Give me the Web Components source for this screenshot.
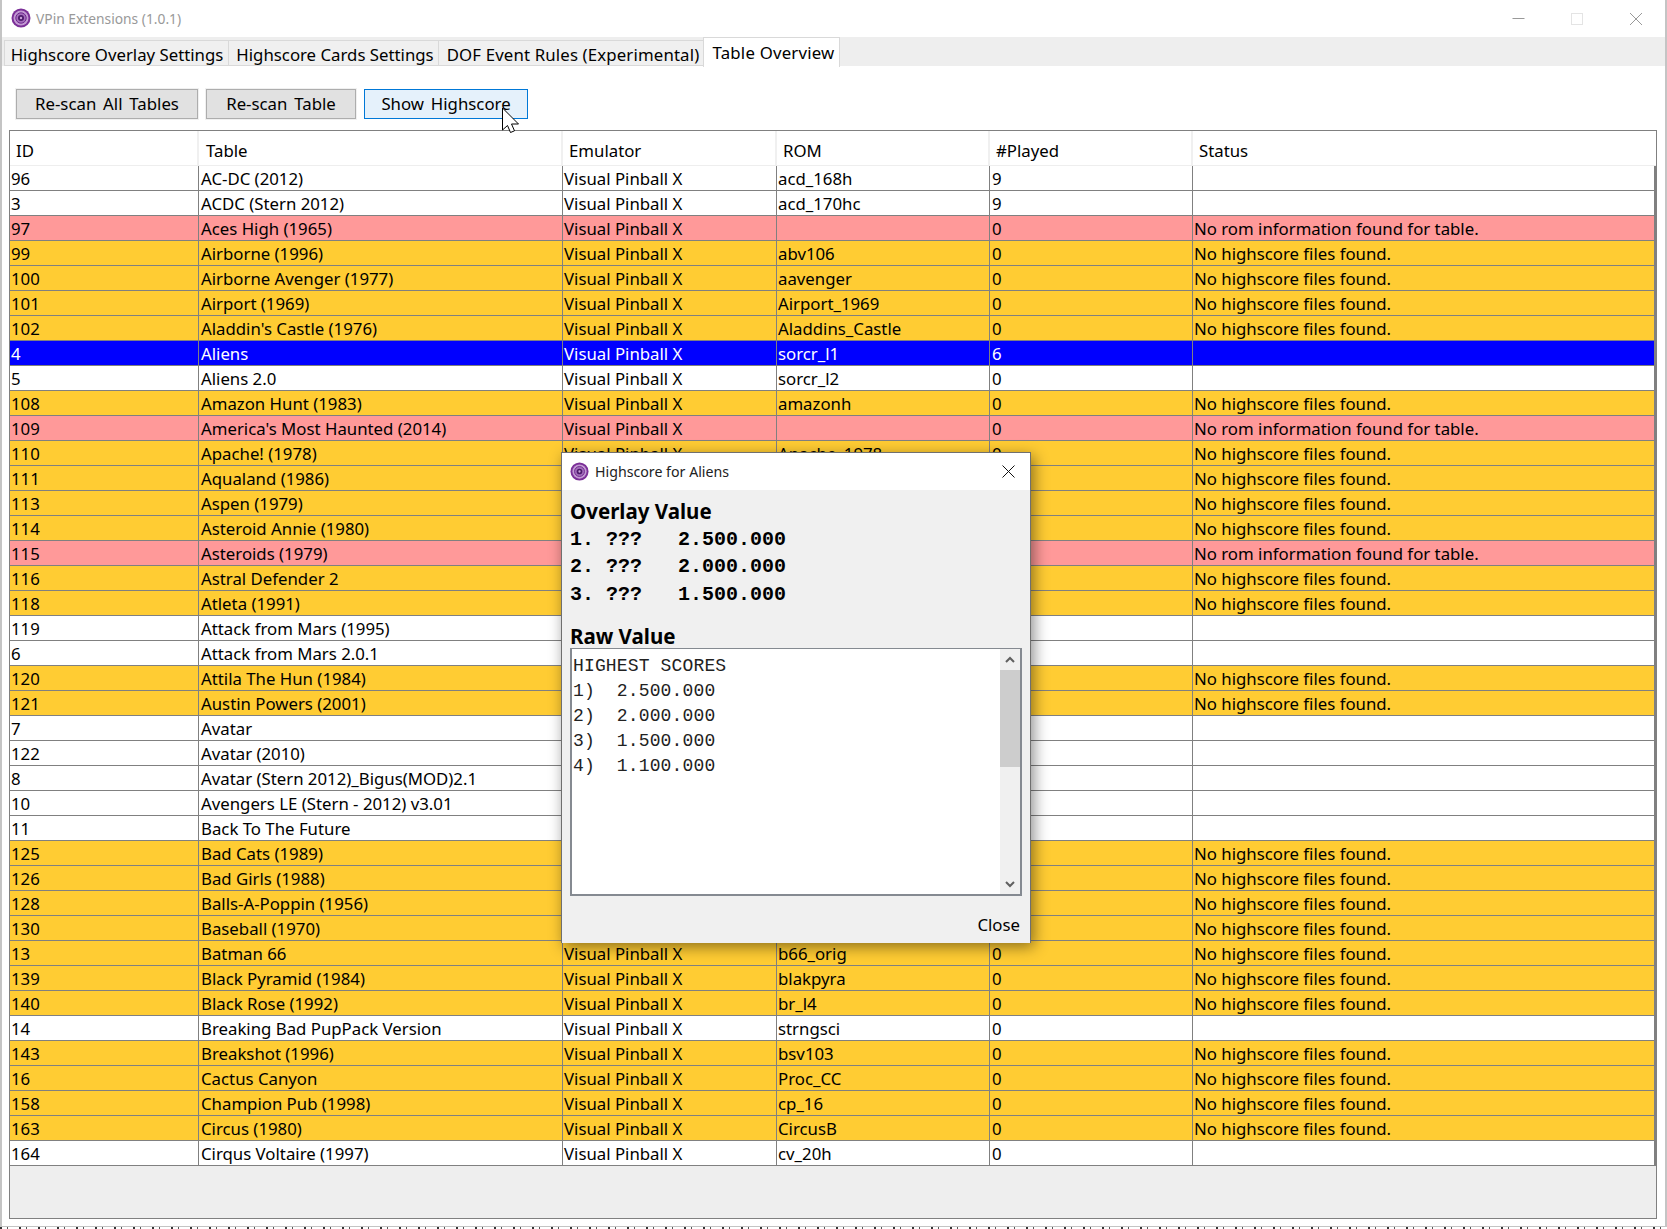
<!DOCTYPE html>
<html>
<head>
<meta charset="utf-8">
<title>VPin Extensions</title>
<style>
  html, body { margin: 0; padding: 0; background: #fff; }
  body { font-family: "Noto Sans", sans-serif; overflow: hidden; }
</style>
</head>
<body>
<vp-window>
  <vp-titlebar slot="title">VPin Extensions (1.0.1)</vp-titlebar>
  <vp-tabs slot="tabs"></vp-tabs>
  <vp-button slot="toolbar" style="width:182px">Re-scan All Tables</vp-button>
  <vp-button slot="toolbar" style="width:150px">Re-scan Table</vp-button>
  <vp-button slot="toolbar" style="width:164px" hover>Show Highscore</vp-button>
  <vp-table slot="content"></vp-table>
  <vp-dialog slot="overlay">Highscore for Aliens</vp-dialog>
  <vp-cursor slot="overlay"></vp-cursor>
</vp-window>
<vp-desktop></vp-desktop>

<script>
(function() {

  const UI_FONT = '"Noto Sans", "Open Sans", sans-serif';

  // Small helper: every element below fills its shadow root from a string
  class Base extends HTMLElement {
    constructor(html) {
      super();
      this.attachShadow({mode: 'open'});
      this.shadowRoot.innerHTML = html;
    }
  }

  const APP_ICON = `
    <circle cx="10" cy="10" r="9.5" fill="#7b2f98"/>
    <circle cx="10" cy="10" r="7.5" fill="#c39ad3"/>
    <circle cx="10" cy="10" r="5.2" fill="#a56dbd" stroke="#6d2a8c" stroke-width="1"/>
    <circle cx="10" cy="10" r="3" fill="#4d1a6b"/>
    <circle cx="10" cy="10" r="1.2" fill="#c9a3d8"/>`;

  // Main window, holds the named regions
  class VpWindow extends Base {
    constructor() {
      super(`
        <style>
          :host { display: block; position: relative; height: 1227px; box-sizing: border-box;
                  border-left: 2px solid #c4c4c4; border-right: 2px solid #c4c4c4;
                  border-bottom: 1px solid #c4c4c4; background: #fff; font-family: ${UI_FONT}; }
          .frame { display: flex; flex-direction: column; height: 100%; }
          .page { flex: 1; display: flex; flex-direction: column; min-height: 0;
                  padding: 23px 8px 7px 7px; margin-top: -1px;
                  border-top: 1px solid #d9d9d9; }
          .toolbar { display: flex; gap: 8px; padding-left: 7px; margin-bottom: 11px; }
        </style>
        <div class="frame">
          <slot name="title"></slot>
          <slot name="tabs"></slot>
          <div class="page">
            <div class="toolbar"><slot name="toolbar"></slot></div>
            <slot name="content"></slot>
          </div>
        </div>
        <slot name="overlay"></slot>`);
    }
  }
  customElements.define('vp-window', VpWindow);

  class VpTitlebar extends Base {
    constructor() {
      super(`
        <style>
          :host { display: flex; align-items: center; height: 37px; flex: none; background: #fff;
                  color: #999; font-size: 13.8px; padding-left: 9px; }
          svg.icon { width: 20px; height: 20px; margin-right: 5px; position: relative; top: -1px; }
          .controls { margin-left: auto; display: flex; }
          .controls svg { width: 58px; height: 37px; display: block; }
        </style>
        <svg class="icon" viewBox="0 0 20 20">${APP_ICON}</svg>
        <slot></slot>
        <div class="controls">
          <svg viewBox="0 0 58 37"><path d="M21.5 18.5h12" stroke="#999" fill="none"/></svg>
          <svg viewBox="0 0 58 37"><rect x="22.5" y="13.5" width="11" height="11" stroke="#e4e4e4" fill="none"/></svg>
          <svg viewBox="0 0 58 37"><path d="M23 13l12 12M35 13L23 25" stroke="#999" fill="none"/></svg>
        </div>`);
    }
  }
  customElements.define('vp-titlebar', VpTitlebar);

  class VpTabs extends Base {
    constructor() {
      super(`
        <style>
          :host { display: flex; align-items: flex-end; height: 29px; flex: none; background: #eee;
                  padding-left: 2px; position: relative; z-index: 1; font-size: 16.8px; color: #000; }
          .tab { box-sizing: border-box; height: 26px; line-height: 28px; background: #f0f0f0;
                 border: 1px solid #d9d9d9; border-right: 0; white-space: nowrap; text-align: center; }
          .tab.active { height: 30px; line-height: 29px; background: #fff; border-right: 1px solid #d9d9d9;
                        border-bottom: 0; margin-bottom: -1px; letter-spacing: .2px; }
        </style>
        <div class="tab" style="width:224px;padding-left:1px">Highscore Overlay Settings</div>
        <div class="tab" style="width:210px;padding-left:3px">Highscore Cards Settings</div>
        <div class="tab" style="width:265px;padding-left:4px;letter-spacing:.15px">DOF Event Rules (Experimental)</div>
        <div class="tab active" style="width:137px;padding-left:4px">Table Overview</div>`);
    }
  }
  customElements.define('vp-tabs', VpTabs);

  class VpButton extends Base {
    constructor() {
      super(`
        <style>
          :host { display: block; box-sizing: border-box; height: 30px; line-height: 28px; text-align: center;
                  border: 1px solid #adadad; background: #e1e1e1; font-size: 16.8px; word-spacing: 2.5px; color: #000;
                  white-space: nowrap; box-shadow: 0 0 0 1px #f0f0f0; }
          :host([hover]) { background: #e5f1fb; border-color: #0078d7; box-shadow: none; }
        </style>
        <slot></slot>`);
    }
  }
  customElements.define('vp-button', VpButton);

  const NOHS = 'No highscore files found.';
  const NOROM = 'No rom information found for table.';
  const VPX = 'Visual Pinball X';

  // id, table, emulator, rom, played, status
  const ROWS = [
    ['96', 'AC-DC (2012)', VPX, 'acd_168h', '9', ''],
    ['3', 'ACDC (Stern 2012)', VPX, 'acd_170hc', '9', ''],
    ['97', 'Aces High (1965)', VPX, '', '0', NOROM],
    ['99', 'Airborne (1996)', VPX, 'abv106', '0', NOHS],
    ['100', 'Airborne Avenger (1977)', VPX, 'aavenger', '0', NOHS],
    ['101', 'Airport (1969)', VPX, 'Airport_1969', '0', NOHS],
    ['102', "Aladdin's Castle (1976)", VPX, 'Aladdins_Castle', '0', NOHS],
    ['4', 'Aliens', VPX, 'sorcr_l1', '6', '', 'sel'],
    ['5', 'Aliens 2.0', VPX, 'sorcr_l2', '0', ''],
    ['108', 'Amazon Hunt (1983)', VPX, 'amazonh', '0', NOHS],
    ['109', "America's Most Haunted (2014)", VPX, '', '0', NOROM],
    ['110', 'Apache! (1978)', VPX, 'Apache_1978', '0', NOHS],
    ['111', 'Aqualand (1986)', '', '', '', NOHS],
    ['113', 'Aspen (1979)', '', '', '', NOHS],
    ['114', 'Asteroid Annie (1980)', '', '', '', NOHS],
    ['115', 'Asteroids (1979)', '', '', '', NOROM],
    ['116', 'Astral Defender 2', '', '', '', NOHS],
    ['118', 'Atleta (1991)', '', '', '', NOHS],
    ['119', 'Attack from Mars (1995)', '', '', '', ''],
    ['6', 'Attack from Mars 2.0.1', '', '', '', ''],
    ['120', 'Attila The Hun (1984)', '', '', '', NOHS],
    ['121', 'Austin Powers (2001)', '', '', '', NOHS],
    ['7', 'Avatar', '', '', '', ''],
    ['122', 'Avatar (2010)', '', '', '', ''],
    ['8', 'Avatar (Stern 2012)_Bigus(MOD)2.1', '', '', '', ''],
    ['10', 'Avengers LE (Stern - 2012) v3.01', '', '', '', ''],
    ['11', 'Back To The Future', '', '', '', ''],
    ['125', 'Bad Cats (1989)', '', '', '', NOHS],
    ['126', 'Bad Girls (1988)', '', '', '', NOHS],
    ['128', 'Balls-A-Poppin (1956)', '', '', '', NOHS],
    ['130', 'Baseball (1970)', '', '', '', NOHS],
    ['13', 'Batman 66', VPX, 'b66_orig', '0', NOHS],
    ['139', 'Black Pyramid (1984)', VPX, 'blakpyra', '0', NOHS],
    ['140', 'Black Rose (1992)', VPX, 'br_l4', '0', NOHS],
    ['14', 'Breaking Bad PupPack Version', VPX, 'strngsci', '0', ''],
    ['143', 'Breakshot (1996)', VPX, 'bsv103', '0', NOHS],
    ['16', 'Cactus Canyon', VPX, 'Proc_CC', '0', NOHS],
    ['158', 'Champion Pub (1998)', VPX, 'cp_16', '0', NOHS],
    ['163', 'Circus (1980)', VPX, 'CircusB', '0', NOHS],
    ['164', 'Cirqus Voltaire (1997)', VPX, 'cv_20h', '0', '']
  ];

  const HEADERS = ['ID', 'Table', 'Emulator', 'ROM', '#Played', 'Status'];

  class VpTable extends Base {
    constructor() {
      const rowClass = r => r[6] ? 'sel' : r[5] === NOROM ? 'rom' : r[5] === NOHS ? 'hs' : '';
      const head = HEADERS.map(h => `<div class="th">${h}</div>`).join('');
      const body = ROWS.map(r =>
        `<div class="row ${rowClass(r)}">` +
        r.slice(0, 6).map(c => `<div class="td">${c}</div>`).join('') +
        `</div>`).join('');
      super(`
        <style>
          :host { display: flex; flex-direction: column; flex: 1; min-height: 0; box-sizing: border-box;
                  border: 1px solid #808080; background: #eee; font-size: 16.8px; color: #000; }
          .row, .head { display: grid; grid-template-columns: 189px 364px 214px 213px 203px 1fr; }
          .head { background: #fff; height: 34px; border-bottom: 1px solid #eee; box-sizing: content-box; }
          .th { padding: 6px 0 0 6px; line-height: 28px; border-right: 2px solid #f0f0f0; box-sizing: border-box; }
          .th:nth-child(2) { padding-left: 7px; }
          .th:last-child { border-right: 0; }
          .rows { border-right: 2px solid #808080; }
          .row { height: 25px; box-sizing: border-box; border-bottom: 1px solid #808080; background: #fff; }
          .td { box-sizing: border-box; padding-left: 1px; line-height: 25px; border-right: 1px solid #808080;
                white-space: nowrap; overflow: hidden; }
          .td:nth-child(2), .td:nth-child(5) { padding-left: 2px; }
          .td:last-child { border-right: 0; }
          .hs { background: #ffcc33; }
          .rom { background: #ff9999; }
          .sel { background: #0000ff; color: #fff; }
        </style>
        <div class="head">${head}</div>
        <div class="rows">${body}</div>`);
    }
  }
  customElements.define('vp-table', VpTable);

  // The highscore dialog floats over the table
  class VpDialog extends Base {
    constructor() {
      super(`
        <style>
          :host { display: flex; flex-direction: column; position: absolute; left: 559px; top: 452px;
                  width: 470px; height: 491px; box-sizing: border-box; border: 1px solid #6f6f6f; border-width: 1px 1px 0 1px;
                  background: #f0f0f0; box-shadow: 3px 4px 14px rgba(0,0,0,.45); color: #000; }
          .bar { display: flex; align-items: center; height: 37px; flex: none; background: #fff; padding-left: 8px;
                 font-size: 14.2px; color: #222; }
          .bar svg.icon { width: 19px; height: 19px; margin-right: 6px; }
          .bar svg.x { margin-left: auto; margin-right: 14px; width: 15px; height: 15px; }
          .body { flex: 1; display: flex; flex-direction: column; padding: 7px 8px 0 8px; min-height: 0; }
          h2 { margin: 0; font-size: 20.5px; line-height: 28px; font-weight: 700; }
          .score { font: 700 20px/27.3px "Liberation Mono", monospace; white-space: pre; margin-top: 1px; }
          h2.raw { margin-top: 14px; }
          .area { display: flex; height: 248px; box-sizing: border-box; background: #fff; margin-top: -2px;
                  border: 1px solid #858a91; border-width: 1px 2px 2px 2px; }
          pre { flex: 1; margin: 0; padding: 5px 0 0 1px; font: 400 18px/25px "Liberation Mono", monospace;
                letter-spacing: .15px; color: #222; }
          .sb { width: 20px; display: flex; flex-direction: column; background: #f0f0f0; }
          .sb svg { width: 20px; height: 21px; flex: none; display: block; }
          .thumb { height: 97px; background: #cdcdcd; flex: none; }
          .fill { flex: 1; }
          .foot { text-align: right; font-size: 16.8px; padding: 17px 2px 0 0; line-height: 24px; }
        </style>
        <div class="bar">
          <svg class="icon" viewBox="0 0 20 20">${APP_ICON}</svg>
          <span><slot></slot></span>
          <svg class="x" viewBox="0 0 15 15"><path d="M1.5 1.5l12 12M13.5 1.5l-12 12" stroke="#111" fill="none"/></svg>
        </div>
        <div class="body">
          <h2>Overlay Value</h2>
          <div class="score">1. ???   2.500.000
2. ???   2.000.000
3. ???   1.500.000</div>
          <h2 class="raw">Raw Value</h2>
          <div class="area">
            <pre>HIGHEST SCORES
1)  2.500.000
2)  2.000.000
3)  1.500.000
4)  1.100.000</pre>
            <div class="sb">
              <svg viewBox="0 0 20 21"><path d="M6 13l4-4 4 4" stroke="#606060" stroke-width="2" fill="none"/></svg>
              <div class="thumb"></div>
              <div class="fill"></div>
              <svg viewBox="0 0 20 21"><path d="M6 9l4 4 4-4" stroke="#606060" stroke-width="2" fill="none"/></svg>
            </div>
          </div>
          <div class="foot">Close</div>
        </div>`);
    }
  }
  customElements.define('vp-dialog', VpDialog);

  class VpCursor extends Base {
    constructor() {
      super(`
        <style>
          :host { display: block; position: absolute; left: 499px; top: 107px; width: 20px; height: 28px; }
          svg { display: block; width: 20px; height: 28px; }
        </style>
        <svg viewBox="0 0 20 28"><path d="M1.5 1v22l5-4.5 3 7 4-1.7-3-6.8h7z" fill="#fff" stroke="#000" stroke-width="1"/></svg>`);
    }
  }
  customElements.define('vp-cursor', VpCursor);

  // Sliver of the desktop showing under the window
  class VpDesktop extends Base {
    constructor() {
      super(`
        <style>
          :host { display: block; height: 2px; background: repeating-linear-gradient(90deg, #333 0 2px, #fff 2px 7px, #555 7px 8px, #fff 8px 19px); }
        </style>`);
    }
  }
  customElements.define('vp-desktop', VpDesktop);

})();
</script>
</body>
</html>
